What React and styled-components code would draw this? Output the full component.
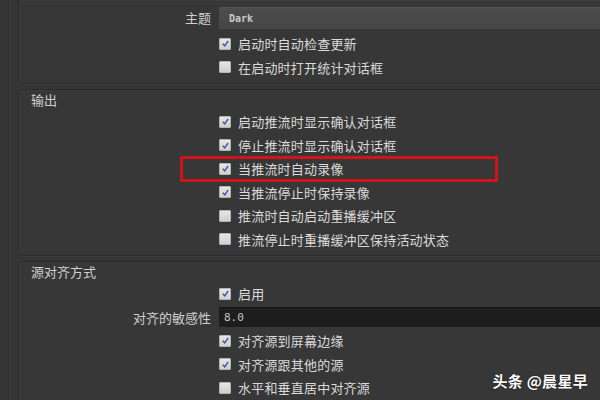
import React from 'react'
import styled, { createGlobalStyle } from 'styled-components'

const GlobalStyle = createGlobalStyle`
  html, body {
    margin: 0;
    padding: 0;
    background: #353535;
    overflow: hidden;
  }
  body {
    font-family: "Noto Sans CJK SC", "Noto Sans", sans-serif;
    font-size: 13px;
    color: #d6d6d6;
  }
`

const Window = styled.div`
  position: relative;
  width: 600px;
  height: 400px;
  overflow: hidden;
  background: #353535;
`

const Pane = styled.div`
  margin-left: 8px;
  width: 700px;
  height: 100%;
  border-left: 1px solid #2a2a2a;
  box-shadow: inset 1px 0 0 #3e3e3e;
  padding-left: 9px;
  display: flex;
  flex-direction: column;
  gap: 5px;
`

const Group = styled.div`
  border: 1px solid #2b2b2b;
  border-top: ${({ $open }) => ($open ? 'none' : '1px solid #2b2b2b')};
  border-radius: ${({ $open }) => ($open ? '0 0 0 5px' : '5px 0 0 5px')};
  box-shadow: 1px 1px 0 #3f3f3f, inset 1px 1px 0 #3c3c3c;
  background: #373737;
  padding: ${({ $open }) => ($open ? '7px 0 4px' : '0 0 4px')};
`

const Title = styled.div`
  height: 20px;
  line-height: 20px;
  padding-left: 12px;
  color: #d0d0d0;
`

const Form = styled.div`
  display: grid;
  grid-template-columns: 192px 1fr;
  column-gap: 8px;
  align-items: center;
`

const Label = styled.div`
  grid-column: 1;
  text-align: right;
  color: #cfcfcf;
`

const Field = styled.div`
  grid-column: 2;
  position: relative;
  display: flex;
  align-items: center;
  height: ${({ $h }) => $h || 23.5}px;
`

const Select = styled.div`
  flex: 1;
  height: 21px;
  background: linear-gradient(#4c4c4c, #464646);
  border-top: 1px solid #525252;
  border-radius: 2px 0 0 2px;
  display: flex;
  align-items: center;
  padding-left: 10px;
  font-family: "DejaVu Sans Mono", monospace;
  font-size: 10px;
  font-weight: bold;
  color: #c8c8c8;
  margin-bottom: 4px;
`

const Input = styled.div`
  flex: 1;
  height: 19px;
  background: #1d1d1d;
  border-top: 1px solid #161616;
  display: flex;
  align-items: center;
  padding-left: 5px;
  font-family: "DejaVu Sans Mono", monospace;
  font-size: 11px;
  color: #c4c4c4;
`

const Box = styled.span`
  width: 12px;
  height: 12px;
  flex: none;
  box-sizing: border-box;
  background: linear-gradient(#e6e6e6, #cfcfcf);
  border: 1px solid #b4b4b4;
  border-radius: 1px;
  margin-right: 7px;
  display: flex;
  align-items: center;
  justify-content: center;
`

const Text = styled.span`
  white-space: nowrap;
  color: #dadada;
  letter-spacing: 0.2px;
`

const Highlight = styled.span`
  position: absolute;
  left: -39px;
  top: -1px;
  width: 318px;
  height: 26px;
  box-sizing: border-box;
  border: 3px solid #d0141e;
  border-radius: 1px;
`

const Watermark = styled.div`
  position: absolute;
  right: 12px;
  bottom: 9px;
  font-size: 15px;
  font-weight: bold;
  color: #fafafa;
  text-shadow: 0 0 2px rgba(0, 0, 0, 0.6);
  letter-spacing: 0.3px;
`

const Check = ({ on, children, marked }) => (
  <Field>
    <Box>
      {on && (
        <svg width="9" height="9" viewBox="0 0 10 10">
          <path d="M2 5.2 L4.2 7.6 L8 2" fill="none" stroke="#3d55a8" strokeWidth="1.6" />
        </svg>
      )}
    </Box>
    <Text>{children}</Text>
    {marked && <Highlight />}
  </Field>
)

const App = () => (
  <Window>
    <GlobalStyle />
    <Pane>
      <Group $open>
        <Form>
          <Label style={{ marginBottom: 4 }}>主题</Label>
          <Field $h={25}>
            <Select>Dark</Select>
          </Field>
          <Check on>启动时自动检查更新</Check>
          <Check>在启动时打开统计对话框</Check>
        </Form>
      </Group>

      <Group>
        <Title>输出</Title>
        <Form>
          <Check on>启动推流时显示确认对话框</Check>
          <Check on>停止推流时显示确认对话框</Check>
          <Check on marked>当推流时自动录像</Check>
          <Check on>当推流停止时保持录像</Check>
          <Check>推流时自动启动重播缓冲区</Check>
          <Check>推流停止时重播缓冲区保持活动状态</Check>
        </Form>
      </Group>

      <Group>
        <Title>源对齐方式</Title>
        <Form>
          <Check on>启用</Check>
          <Label>对齐的敏感性</Label>
          <Field>
            <Input>8.0</Input>
          </Field>
          <Check on>对齐源到屏幕边缘</Check>
          <Check on>对齐源跟其他的源</Check>
          <Check>水平和垂直居中对齐源</Check>
        </Form>
      </Group>
    </Pane>
    <Watermark>头条 @晨星早</Watermark>
  </Window>
)

export default App
